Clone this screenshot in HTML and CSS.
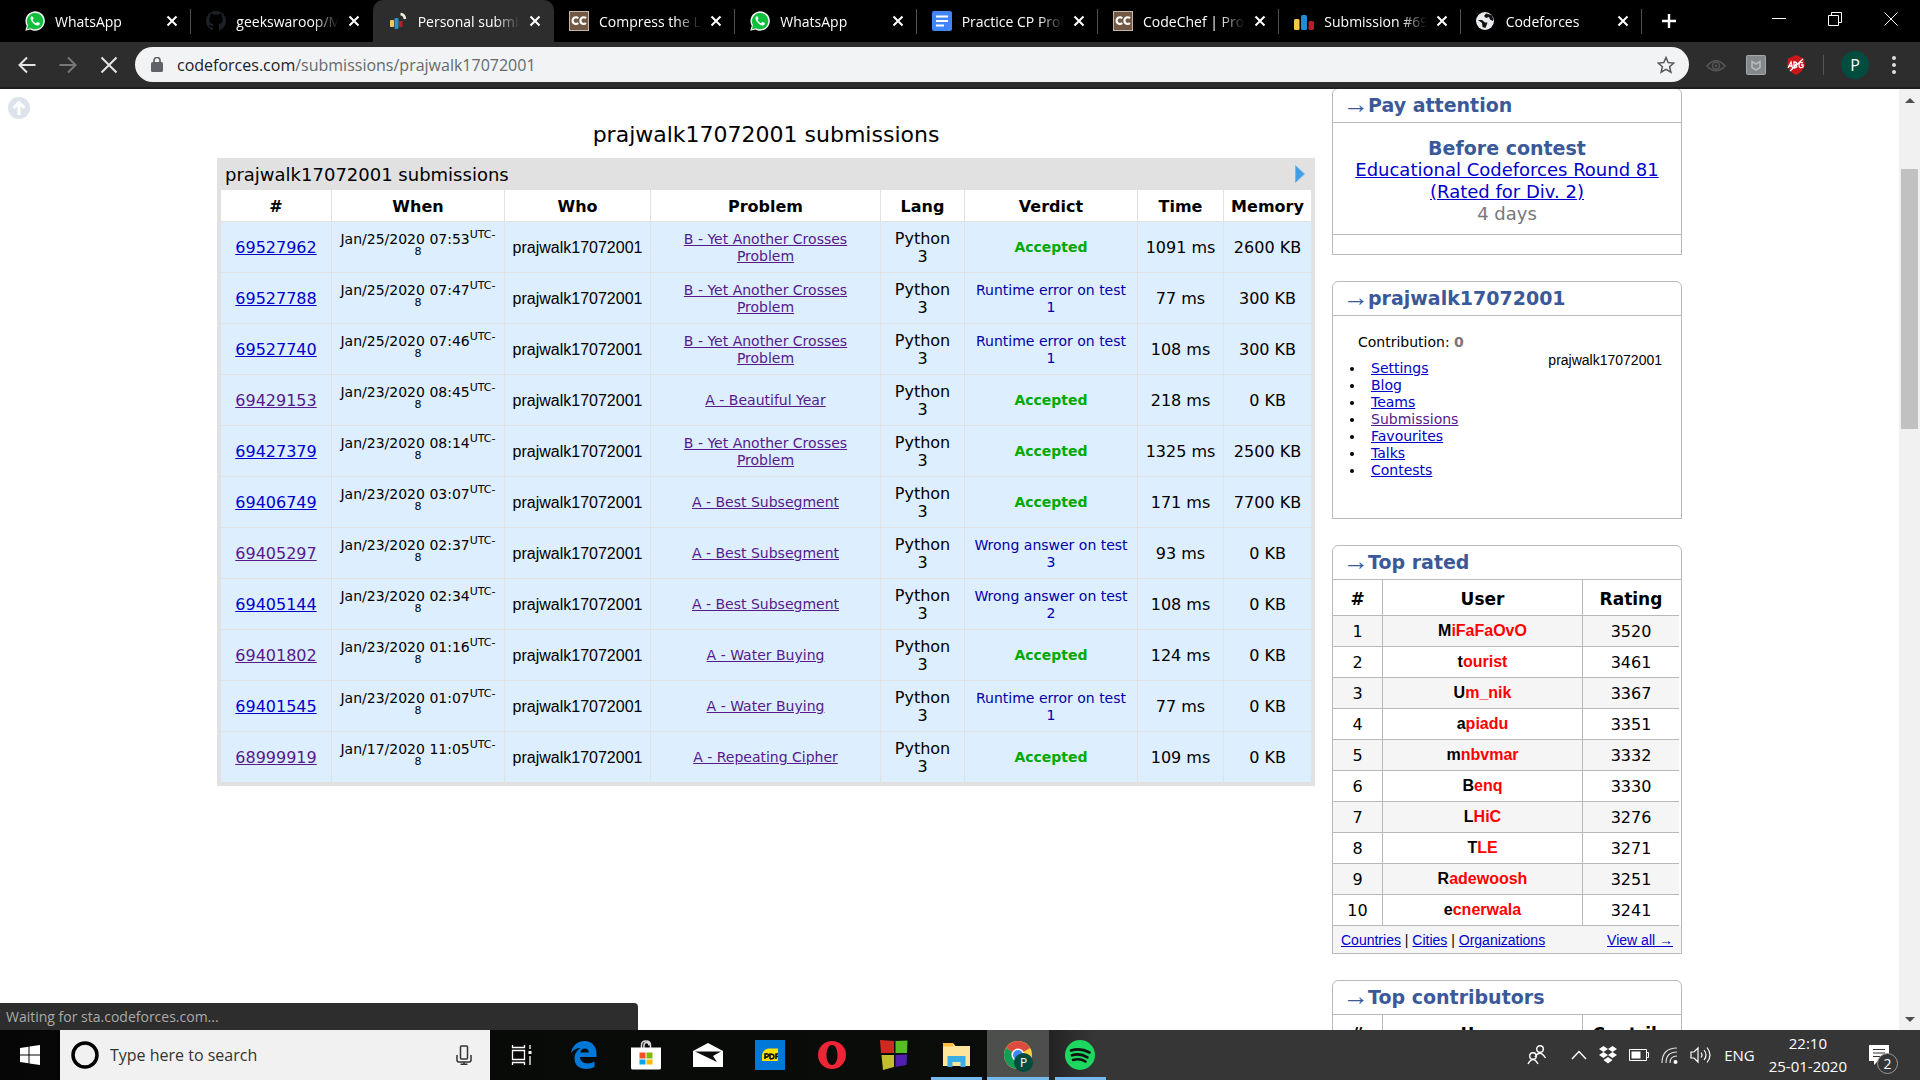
FILE: index.html
```html
<!DOCTYPE html>
<html lang="en">
<head>
<meta charset="utf-8">
<title>Personal submissions - Codeforces</title>
<link rel="stylesheet" href="styles.css">
</head>
<body>
<svg class="sprite" aria-hidden="true">
  <symbol id="i-close" viewBox="0 0 12 12"><path d="M1.500 1.500 10.500 10.500M10.500 1.500 1.500 10.500" fill="none" stroke="currentColor" stroke-width="2"/></symbol>
  <symbol id="i-whatsapp" viewBox="0 0 20 20"><path d="M.3 19.800 1.700 14.700A9.700 9.700 0 1 1 5.400 18.400Z" fill="#f4f4f4"/><path d="M1.900 18.200 3 14.300a8.200 8.200 0 1 1 2.900 2.900Z" fill="#12bf3c"/><path d="M6.800 5.200c-1.200.5-1.500 2-1 3.300.9 2.700 3.500 5.400 6.300 6 1.400.2 2.700-.6 2.800-1.900.1-.5-2.200-1.600-2.600-1.500-.5.1-.8 1.100-1.200 1.100-1.300-.3-3-2-3.500-3.300 0-.4.900-.9.900-1.400-.1-.6-.8-2.300-1.700-2.300Z" fill="#fff"/></symbol>
  <symbol id="i-chef" viewBox="0 0 20 20"><rect width="20" height="20" fill="#c9b6a6"/><rect x="1" y="1" width="18" height="18" fill="#735844"/><path d="M9.200 7.300A3.300 3.300 0 1 0 9.200 12M17 7.300A3.300 3.300 0 1 0 17 12" fill="none" stroke="#fff" stroke-width="2.200"/></symbol>
</svg>

<header class="tabs">
  <div class="tab-list">
    <div class="tab"><svg class="fav"><use href="#i-whatsapp"/></svg><span class="tab-title">WhatsApp</span><button class="tab-close" aria-label="Close tab"><svg><use href="#i-close"/></svg></button></div>
    <div class="tab no-line"><svg class="fav" viewBox="0 0 20 20"><path d="M7 19.500v-3.200c-3 .6-3.600-1.300-4.500-2.300 2-.4 2.200 1.400 4.500.9.100-.7.400-1.100.8-1.400C4.500 13 3.300 11.500 3.300 8.600c0-1.200.4-2.200 1.100-3-.2-.8-.2-1.900.2-3 1.300.1 2.200.7 3 1.200a9 9 0 0 1 4.800 0c.8-.5 1.700-1.100 3-1.200.4 1.100.4 2.200.2 3 .7.800 1.100 1.800 1.100 3 0 2.900-1.200 4.400-4.500 4.900.6.500.8 1.200.8 2.200v3.800A10 10 0 1 0 7 19.500Z" fill="#1d2024"/></svg><span class="tab-title">geekswaroop/ML</span><button class="tab-close" aria-label="Close tab"><svg><use href="#i-close"/></svg></button></div>
    <div class="tab active"><svg class="fav" viewBox="0 0 20 20"><rect x="2" y="9" width="4" height="7" rx="1" fill="#f4c84b"/><rect x="6.500" y="7" width="4" height="11" rx="1" fill="#2a8fcb"/><rect x="11" y="10" width="3.500" height="6" rx="1" fill="#b3202c"/><path d="M12.500 3q4 .5 4.500 5" fill="none" stroke="#eef0df" stroke-width="2.600"/></svg><span class="tab-title">Personal submissions</span><button class="tab-close" aria-label="Close tab"><svg><use href="#i-close"/></svg></button></div>
    <div class="tab"><svg class="fav"><use href="#i-chef"/></svg><span class="tab-title">Compress the List</span><button class="tab-close" aria-label="Close tab"><svg><use href="#i-close"/></svg></button></div>
    <div class="tab"><svg class="fav"><use href="#i-whatsapp"/></svg><span class="tab-title">WhatsApp</span><button class="tab-close" aria-label="Close tab"><svg><use href="#i-close"/></svg></button></div>
    <div class="tab"><svg class="fav" viewBox="0 0 20 20"><rect width="20" height="20" rx="2" fill="#4285f4"/><path d="M4 5.500h12M4 10h12M4 14.500h8" stroke="#fff" stroke-width="2.200"/></svg><span class="tab-title">Practice CP Problems</span><button class="tab-close" aria-label="Close tab"><svg><use href="#i-close"/></svg></button></div>
    <div class="tab"><svg class="fav"><use href="#i-chef"/></svg><span class="tab-title">CodeChef | Programming</span><button class="tab-close" aria-label="Close tab"><svg><use href="#i-close"/></svg></button></div>
    <div class="tab"><svg class="fav" viewBox="0 0 20 20"><rect y="8" width="5.500" height="11" rx="1.500" fill="#f4c84b"/><rect x="7" y="4" width="6" height="15" rx="1.500" fill="#1f8dd0"/><rect x="14.500" y="10" width="5.500" height="9" rx="1.500" fill="#b91d25"/></svg><span class="tab-title">Submission #69527962</span><button class="tab-close" aria-label="Close tab"><svg><use href="#i-close"/></svg></button></div>
    <div class="tab"><svg class="fav" viewBox="0 0 20 20"><circle cx="9" cy="10" r="9" fill="#e8eaed"/><path d="M2 9h4l3 2.500h2.500l-2 5.500-3-1-.5-4ZM10 2.500 8 5l2 2 3-1 1 2.500 3 1.500.5-2-2-4Z" fill="#111"/></svg><span class="tab-title">Codeforces</span><button class="tab-close" aria-label="Close tab"><svg><use href="#i-close"/></svg></button></div>
  </div>
  <div class="window-tools">
    <button aria-label="New tab"><svg width="16" height="16" viewBox="0 0 16 16"><path d="M8 1v14M1 8h14" stroke="#fff" stroke-width="2.400"/></svg></button>
    <div class="window-buttons">
      <button aria-label="Minimize"><svg width="14" height="14" viewBox="0 0 14 14"><path d="M0 6.500h14" stroke="#fff"/></svg></button>
      <button aria-label="Restore"><svg width="14" height="14" viewBox="0 0 14 14"><path d="M.5 3.500h10v10H.5ZM3.500 3.500v-3h10v10h-3" fill="none" stroke="#fff"/></svg></button>
      <button aria-label="Close window"><svg width="14" height="14" viewBox="0 0 14 14"><path d="m.5.5 13 13m0-13-13 13" stroke="#fff"/></svg></button>
    </div>
  </div>
</header>

<nav class="toolbar" aria-label="Browser toolbar">
  <div class="nav-buttons">
    <button aria-label="Back"><svg width="18" height="18" viewBox="0 0 18 18"><path d="M17.500 9H2M9 1.500 1.500 9 9 16.500" fill="none" stroke="#e4e4e4" stroke-width="2"/></svg></button>
    <button aria-label="Forward"><svg width="18" height="18" viewBox="0 0 18 18"><path d="M.5 9H16M9 1.500 16.500 9 9 16.500" fill="none" stroke="#777" stroke-width="2"/></svg></button>
    <button aria-label="Stop"><svg width="18" height="18" viewBox="0 0 18 18"><path d="m1.500 1.500 15 15m0-15-15 15" stroke="#e4e4e4" stroke-width="2"/></svg></button>
  </div>
  <div class="omnibox">
    <svg width="12" height="16" viewBox="0 0 12 16"><rect y="5" width="12" height="10" rx="1.500" fill="#5f6368"/><path d="M3 6V3.500a3 3 0 0 1 6 0V6" fill="none" stroke="#5f6368" stroke-width="1.700"/></svg>
    <span class="url"><b>codeforces.com</b>/submissions/prajwalk17072001</span>
    <button aria-label="Bookmark this page"><svg width="18" height="18" viewBox="0 0 18 18"><path d="m9 1.500 2.200 5.100 5.600.5-4.200 3.700 1.300 5.400L9 13.300l-4.900 2.900 1.300-5.400L1.200 7.100l5.600-.5Z" fill="none" stroke="#55595e" stroke-width="1.500"/></svg></button>
  </div>
  <div class="extensions">
    <button aria-label="Eye extension"><svg width="20" height="20" viewBox="0 0 20 20"><path d="M1 11Q10 .5 19 11 10 20.500 1 11Z" fill="none" stroke="#555" stroke-width="1.700"/><circle cx="10" cy="10.800" r="3.500" fill="none" stroke="#555" stroke-width="1.600"/><circle cx="10" cy="10.800" r="1.300" fill="#555"/></svg></button>
    <button aria-label="Safety extension"><svg width="20" height="20" viewBox="0 0 20 20"><rect x=".5" y=".5" width="19" height="19" rx="1" fill="#84888b" stroke="#a4a8ab"/><path d="M6 6.500 10 9l4-2.500v6L10 15l-4-2.500Z" fill="none" stroke="#b4b8bb" stroke-width="1.600"/></svg></button>
    <button aria-label="Ad blocker"><svg width="20" height="20" viewBox="0 0 20 20"><path d="M10 0 18 3.500 19 11 15 17l-5 3-5-3-4-6 1-7.500Z" fill="#c9161d"/><path d="m2 13 3-6 1.500 6M3 11h3M8 13V7q4 0 1.500 3 3.500 2-1.500 3M17 8q-4-2-4 2t4 2v-2h-2M4 16 17 4" fill="none" stroke="#fff" stroke-width="1.300"/></svg></button>
  </div>
  <span class="divider"></span>
  <button class="avatar" aria-label="Profile">P</button>
  <button class="menu" aria-label="Menu"><svg width="4" height="20" viewBox="0 0 4 20"><g fill="#ddd"><circle cx="2" cy="3" r="2"/><circle cx="2" cy="10" r="2"/><circle cx="2" cy="17" r="2"/></g></svg></button>
</nav>

<div class="viewport">
  <div class="page">
    <button class="to-top" aria-label="Scroll to top"><svg width="22" height="22" viewBox="0 0 22 22"><circle cx="11" cy="11" r="11" fill="#dde3ea"/><path d="M11 18V6M5.500 11 11 5.500l5.500 5.500" fill="none" stroke="#fff" stroke-width="3"/></svg></button>
    <div class="content">
      <main>
        <h1>prajwalk17072001 submissions</h1>
        <section class="datatable">
          <div class="datatable-head"><span>prajwalk17072001 submissions</span><button aria-label="Show filter"><svg width="10" height="18" viewBox="0 0 10 18"><path d="M.5.500 9.500 9 .5 17.500Z" fill="#3f9fe6" stroke="#77b7e8"/></svg></button></div>
          <table class="submissions">
            <colgroup><col class="c-id"><col class="c-when"><col class="c-who"><col><col class="c-lang"><col class="c-verdict"><col class="c-time"><col class="c-mem"></colgroup>
            <thead><tr><th>#</th><th>When</th><th>Who</th><th>Problem</th><th>Lang</th><th>Verdict</th><th>Time</th><th>Memory</th></tr></thead>
            <tbody>
            <tr><td><a href="#s">69527962</a></td><td class="small">Jan/25/2020 07:53<sup>UTC-<br>8</sup></td><td class="who">prajwalk17072001</td><td class="small"><a class="seen" href="#p">B - Yet Another Crosses<br>Problem</a></td><td>Python<br>3</td><td class="small ok">Accepted</td><td>1091 ms</td><td>2600 KB</td></tr>
            <tr><td><a href="#s">69527788</a></td><td class="small">Jan/25/2020 07:47<sup>UTC-<br>8</sup></td><td class="who">prajwalk17072001</td><td class="small"><a class="seen" href="#p">B - Yet Another Crosses<br>Problem</a></td><td>Python<br>3</td><td class="small bad">Runtime error on test<br>1</td><td>77 ms</td><td>300 KB</td></tr>
            <tr><td><a href="#s">69527740</a></td><td class="small">Jan/25/2020 07:46<sup>UTC-<br>8</sup></td><td class="who">prajwalk17072001</td><td class="small"><a class="seen" href="#p">B - Yet Another Crosses<br>Problem</a></td><td>Python<br>3</td><td class="small bad">Runtime error on test<br>1</td><td>108 ms</td><td>300 KB</td></tr>
            <tr><td><a class="seen" href="#s">69429153</a></td><td class="small">Jan/23/2020 08:45<sup>UTC-<br>8</sup></td><td class="who">prajwalk17072001</td><td class="small"><a class="seen" href="#p">A - Beautiful Year</a></td><td>Python<br>3</td><td class="small ok">Accepted</td><td>218 ms</td><td>0 KB</td></tr>
            <tr><td><a href="#s">69427379</a></td><td class="small">Jan/23/2020 08:14<sup>UTC-<br>8</sup></td><td class="who">prajwalk17072001</td><td class="small"><a class="seen" href="#p">B - Yet Another Crosses<br>Problem</a></td><td>Python<br>3</td><td class="small ok">Accepted</td><td>1325 ms</td><td>2500 KB</td></tr>
            <tr><td><a href="#s">69406749</a></td><td class="small">Jan/23/2020 03:07<sup>UTC-<br>8</sup></td><td class="who">prajwalk17072001</td><td class="small"><a class="seen" href="#p">A - Best Subsegment</a></td><td>Python<br>3</td><td class="small ok">Accepted</td><td>171 ms</td><td>7700 KB</td></tr>
            <tr><td><a class="seen" href="#s">69405297</a></td><td class="small">Jan/23/2020 02:37<sup>UTC-<br>8</sup></td><td class="who">prajwalk17072001</td><td class="small"><a class="seen" href="#p">A - Best Subsegment</a></td><td>Python<br>3</td><td class="small bad">Wrong answer on test<br>3</td><td>93 ms</td><td>0 KB</td></tr>
            <tr><td><a href="#s">69405144</a></td><td class="small">Jan/23/2020 02:34<sup>UTC-<br>8</sup></td><td class="who">prajwalk17072001</td><td class="small"><a class="seen" href="#p">A - Best Subsegment</a></td><td>Python<br>3</td><td class="small bad">Wrong answer on test<br>2</td><td>108 ms</td><td>0 KB</td></tr>
            <tr><td><a class="seen" href="#s">69401802</a></td><td class="small">Jan/23/2020 01:16<sup>UTC-<br>8</sup></td><td class="who">prajwalk17072001</td><td class="small"><a class="seen" href="#p">A - Water Buying</a></td><td>Python<br>3</td><td class="small ok">Accepted</td><td>124 ms</td><td>0 KB</td></tr>
            <tr><td><a href="#s">69401545</a></td><td class="small">Jan/23/2020 01:07<sup>UTC-<br>8</sup></td><td class="who">prajwalk17072001</td><td class="small"><a class="seen" href="#p">A - Water Buying</a></td><td>Python<br>3</td><td class="small bad">Runtime error on test<br>1</td><td>77 ms</td><td>0 KB</td></tr>
            <tr><td><a class="seen" href="#s">68999919</a></td><td class="small">Jan/17/2020 11:05<sup>UTC-<br>8</sup></td><td class="who">prajwalk17072001</td><td class="small"><a class="seen" href="#p">A - Repeating Cipher</a></td><td>Python<br>3</td><td class="small ok">Accepted</td><td>109 ms</td><td>0 KB</td></tr>
            </tbody>
          </table>
        </section>
      </main>

      <aside class="sidebar">
        <section class="box">
          <h2><span class="arrow">→</span>Pay attention</h2>
          <div class="contest"><strong>Before contest</strong><a href="#c">Educational Codeforces Round 81<br>(Rated for Div. 2)</a><span>4 days</span></div>
          <div class="strip"></div>
        </section>
        <section class="box">
          <h2><span class="arrow">→</span>prajwalk17072001</h2>
          <div class="profile">
            <div>
              <p>Contribution: <b>0</b></p>
              <ul>
                <li><a href="#a">Settings</a></li><li><a href="#a">Blog</a></li><li><a href="#a">Teams</a></li><li><a class="seen" href="#a">Submissions</a></li><li><a href="#a">Favourites</a></li><li><a href="#a">Talks</a></li><li><a href="#a">Contests</a></li>
              </ul>
            </div>
            <span class="handle">prajwalk17072001</span>
          </div>
        </section>
        <section class="box">
          <h2><span class="arrow">→</span>Top rated</h2>
          <table class="ranking">
            <thead><tr><th class="r-no">#</th><th class="r-user">User</th><th>Rating</th></tr></thead>
            <tbody>
            <tr><td>1</td><td class="user"><i>M</i>iFaFaOvO</td><td>3520</td></tr>
            <tr><td>2</td><td class="user"><i>t</i>ourist</td><td>3461</td></tr>
            <tr><td>3</td><td class="user"><i>U</i>m_nik</td><td>3367</td></tr>
            <tr><td>4</td><td class="user"><i>a</i>piadu</td><td>3351</td></tr>
            <tr><td>5</td><td class="user"><i>m</i>nbvmar</td><td>3332</td></tr>
            <tr><td>6</td><td class="user"><i>B</i>enq</td><td>3330</td></tr>
            <tr><td>7</td><td class="user"><i>L</i>HiC</td><td>3276</td></tr>
            <tr><td>8</td><td class="user"><i>T</i>LE</td><td>3271</td></tr>
            <tr><td>9</td><td class="user"><i>R</i>adewoosh</td><td>3251</td></tr>
            <tr><td>10</td><td class="user"><i>e</i>cnerwala</td><td>3241</td></tr>
            </tbody>
          </table>
          <div class="box-foot"><span><a href="#l">Countries</a> | <a href="#l">Cities</a> | <a href="#l">Organizations</a></span><a href="#l">View all →</a></div>
        </section>
        <section class="box">
          <h2><span class="arrow">→</span>Top contributors</h2>
          <table class="ranking"><thead><tr><th class="r-no">#</th><th class="r-user">User</th><th>Contrib.</th></tr></thead></table>
        </section>
      </aside>
    </div>
  </div>
  <div class="scrollbar" aria-hidden="true">
    <svg width="10" height="5" viewBox="0 0 10 5"><path d="M0 5 5 0l5 5Z" fill="#505050"/></svg>
    <div class="track"><div class="thumb"></div></div>
    <svg width="10" height="5" viewBox="0 0 10 5"><path d="m0 0 5 5 5-5Z" fill="#505050"/></svg>
  </div>
  <div class="status">Waiting for sta.codeforces.com...</div>
</div>

<footer class="taskbar">
  <button class="start" aria-label="Start"><svg width="20" height="20" viewBox="0 0 20 20"><path d="M0 3 8.500 1.700v7.800H0ZM9.500 1.500 20 0v9.500H9.500ZM0 10.500h8.500v7.800L0 17ZM9.500 10.500H20V20L9.500 18.500Z" fill="#fff"/></svg></button>
  <label class="search">
    <svg width="28" height="28" viewBox="0 0 28 28"><circle cx="14" cy="14" r="12" fill="none" stroke="#000" stroke-width="3.500"/></svg>
    <input type="text" placeholder="Type here to search" aria-label="Search">
    <svg width="16" height="20" viewBox="0 0 16 20"><rect x="4.500" y="1" width="7" height="13" rx="1" fill="none" stroke="#333" stroke-width="1.500"/><path d="M1 10v5q0 2 2 2h10q2 0 2-2v-5M8 17v2M4.500 19.200h7" fill="none" stroke="#333" stroke-width="1.500"/></svg>
  </label>
  <div class="apps">
    <button aria-label="Task view"><svg width="22" height="20" viewBox="0 0 22 20"><path d="M1.500 0v2.500h12V0M1.500 5.500h12v9h-12ZM1.500 20v-2.500h12V20M19 0v4M19 11v9" fill="none" stroke="#fff" stroke-width="1.300"/><rect x="17.500" y="6" width="3" height="3" fill="#fff"/></svg></button>
    <button aria-label="Edge"><svg width="26" height="28" viewBox="0 0 26 28"><path d="M0 12C1.500 4 7 0 13.500 0 21 0 25.500 5.500 25.500 12.500V16H9c.5 7 9 8 14.500 4.500V26C15 30 3.500 28 3.500 17.500 3.500 12.500 6 9 10 7 5.500 7 2 9 0 12ZM9.300 11.500h8.500C17.800 6 10 6 9.300 11.500Z" fill="#0078d7"/></svg></button>
    <button aria-label="Store"><svg width="30" height="30" viewBox="0 0 30 30"><path d="M10.500 9V5q0-4 4.500-4t4.500 4v4M13 9V5.500q0-3 2.500-3t2.500 3" fill="none" stroke="#ddd" stroke-width="1.500"/><path d="M0 7.500h30V28q0 1.500-1.500 1.500h-27Q0 29.500 0 28Z" fill="#fff"/><path d="M8.500 12.500h6v6h-6Z" fill="#f25022"/><path d="M15.500 12.500h6v6h-6Z" fill="#7fba00"/><path d="M8.500 19.500h6v5h-6Z" fill="#00a4ef"/><path d="M15.500 19.500h6v5h-6Z" fill="#ffb900"/></svg></button>
    <button aria-label="Mail"><svg width="30" height="24" viewBox="0 0 30 24"><path d="M0 8 15 0l15 8v16H0Z" fill="#fff"/><path d="M2 8.500h26L20 13l4 6-10.500-5Z" fill="#0a0d0a"/></svg></button>
    <button aria-label="PDF reader"><svg width="30" height="30" viewBox="0 0 30 30"><path d="M0 0h30v30H0Z" fill="#0078d7"/><path d="M7 21V15q1-6 7-6.500h9V21Z" fill="#ffe000"/><path d="M10 19v-5q4-.5 3.500 1.500T10 17M15 19v-5q4 0 4 2.500T15 19M21 19v-5h2M21 16.500h2" fill="none" stroke="#111" stroke-width="1.600"/></svg></button>
    <button aria-label="Opera"><svg width="28" height="28" viewBox="0 0 28 28"><path d="M14 0a14 14 0 1 0 0 28 14 14 0 0 0 0-28Zm0 4c3.500 0 5.500 4.500 5.500 10S17.500 24 14 24s-5.500-4.500-5.500-10S10.500 4 14 4Z" fill="#ed2537"/></svg></button>
    <button aria-label="Colour squares"><svg width="28" height="30" viewBox="0 0 28 30"><path d="m0 0 14 1v12H1Z" fill="#cf2a22"/><path d="m15.500 1 12-.5L27 13H15.500Z" fill="#55be25"/><path d="M1.500 15H14v12L3 30Z" fill="#c4bd31"/><path d="M15.500 15 27 14.500 26.500 25l-11 2Z" fill="#5220ae"/></svg></button>
    <button class="running" aria-label="File Explorer"><svg width="28" height="24" viewBox="0 0 28 24"><path d="M1 0h10l2.500 3H28v20H1Z" fill="#ffe59a"/><path d="M1 0h10v3.500H1Z" fill="#ffbd3b"/><path d="M5.500 13h18v11h-5v-5h-8v5h-5Z" fill="#38ade8"/></svg></button>
    <button class="running current" aria-label="Chrome"><svg width="28" height="28" viewBox="0 0 28 28"><circle cx="14" cy="14" r="14" fill="#ffcd40"/><path d="M14 14 1.900 7A14 14 0 0 1 26.100 7Z" fill="#dc4b3e"/><path d="M14 14 1.900 7A14 14 0 0 0 14 28Z" fill="#0f9d58"/><circle cx="14" cy="14" r="6.500" fill="#fff"/><circle cx="14" cy="14" r="5" fill="#4285f4"/></svg><span class="mini">P</span></button>
    <button class="running" aria-label="Spotify"><svg width="30" height="30" viewBox="0 0 30 30"><circle cx="15" cy="15" r="15" fill="#1ed760"/><path d="M6 10.500q9.500-3 18.500 2M7 15.300q8-2.500 15.500 2M8 20q7-2 12.500 1.500" fill="none" stroke="#111" stroke-width="2.600" stroke-linecap="round"/></svg></button>
  </div>
  <div class="tray">
    <svg class="people" width="20" height="20" viewBox="0 0 20 20"><g fill="none" stroke="#fff" stroke-width="1.400"><circle cx="13" cy="4" r="3.300"/><path d="M8 12q5-8 10.500 1"/><circle cx="6" cy="11" r="3.300"/><path d="M1 19q5-9 10 0"/></g></svg>
    <svg width="16" height="16" viewBox="0 0 16 16"><path d="m1 12 7-7.500 7 7.500" fill="none" stroke="#fff" stroke-width="1.400"/></svg>
    <svg width="18" height="18" viewBox="0 0 18 18"><path d="m4.500 0 4.500 3-4.500 3L0 3Zm9 0L18 3l-4.500 3L9 3ZM4.500 6 9 9l-4.500 3L0 9Zm9 0L18 9l-4.500 3L9 9ZM9 11l4.500 3L9 17.500 4.500 14Z" fill="#fff"/></svg>
    <svg width="20" height="12" viewBox="0 0 20 12"><path d="M.5.500h17v11H.5ZM18 3.500h1.500v5H18" fill="none" stroke="#fff"/><path d="M2.500 2.500h9v7h-9Z" fill="#fff"/></svg>
    <svg width="17" height="17" viewBox="0 0 17 17"><path d="M1 16Q1 1 16 1M5 16Q5 5 16 5M9 16q0-7 7-7" fill="none" stroke="#ddd" stroke-width="1.200"/><circle cx="14.500" cy="15" r="2" fill="#fff"/></svg>
    <svg width="22" height="18" viewBox="0 0 22 18"><path d="M1 6v6h3l4 4V2L4 6ZM11 6.500q2 2.500 0 5M14 4q4 5 0 10M17 1.500q6 7.500 0 15" fill="none" stroke="#fff" stroke-width="1.200"/></svg>
    <span>ENG</span>
    <time class="clock">22:10<br>25-01-2020</time>
    <div class="notice"><svg width="20" height="20" viewBox="0 0 20 20"><path d="M0 0h20v16H9l-4 4v-4H0Z" fill="#fff"/><path d="M4 4.500h12M4 8h12M4 11.500h8" stroke="#333" stroke-width="1.200"/></svg><span class="badge">2</span></div>
  </div>
</footer>
</body>
</html>
```
FILE: styles.css
```css
* { box-sizing: border-box; }
html, body { height: 100%; }
body {
  margin: 0;
  display: flex;
  flex-direction: column;
  overflow: hidden;
  font-family: "DejaVu Sans", sans-serif;
  font-size: 16px;
  color: #000;
}
button { margin: 0; padding: 0; border: 0; background: none; color: inherit; font: inherit; display: flex; align-items: center; justify-content: center; flex: none; }
svg { display: block; flex: none; }
a { color: #0000cc; }
a.seen { color: #551a8b; }
.sprite { display: none; }

/* Browser tabs */
.tabs, .toolbar, .status, .taskbar { font-family: "Open Sans", sans-serif; }
.tabs { display: flex; flex: none; height: 42px; background: #000; color: #fff; font-size: 14px; }
.tab-list { display: flex; flex: 1; min-width: 0; padding-left: 10px; }
.tab { position: relative; display: flex; flex: 1; min-width: 0; align-items: center; padding: 0 13px 0 15px; }
.tab::after { content: ""; position: absolute; right: 0; top: 9px; width: 1px; height: 25px; background: #505050; }
.tab.no-line::after, .tab.active::after { display: none; }
.tab.active { background: #2d2d2d; border-radius: 10px 10px 0 0; }
.fav { width: 20px; height: 20px; margin-right: 10px; }
.tab-title { flex: 1; min-width: 0; overflow: hidden; white-space: nowrap; mask-image: linear-gradient(to right, #000 75%, transparent 100%); }
.tab-close { margin-left: 9px; }
.tab-close svg { width: 12px; height: 12px; }
.window-tools { display: flex; width: 278px; align-items: center; justify-content: space-between; padding: 0 22px 0 19px; }
.window-buttons { display: flex; gap: 42px; padding-bottom: 4px; }

/* Toolbar */
.toolbar { display: flex; flex: none; align-items: center; gap: 17px; height: 47px; padding: 0 18px 0 18px; background: #2d2d2d; border-bottom: 2px solid #1f1f1f; }
.nav-buttons { display: flex; gap: 23px; }
.extensions { display: flex; gap: 20px; }
.omnibox { display: flex; flex: 1; align-items: center; height: 35px; padding: 0 14px 0 16px; border-radius: 18px; background: #f1f3f4; }
.url { flex: 1; margin-left: 14px; color: #66696d; }
.url b { color: #202124; font-weight: 400; }
.divider { width: 1px; height: 20px; background: #555; }
.avatar { width: 28px; height: 28px; border-radius: 50%; background: #004d40; color: #fff; }
.menu { width: 16px; }

/* Page area */
.viewport { position: relative; display: flex; flex: 1; min-height: 0; overflow: hidden; background: #fff; }
.page { position: relative; flex: 1; min-width: 0; overflow: hidden; }
.to-top { position: absolute; left: 8px; top: 8px; }
.content { display: flex; gap: 17px; max-width: 1465px; margin: 0 auto; }
main { flex: 1; min-width: 0; }
h1 { margin: 33px 0 10px; font-size: 22px; line-height: 26px; font-weight: 400; text-align: center; }
.datatable { padding: 0 4px 4px; background: #e1e1e1; }
.datatable-head { display: flex; align-items: center; justify-content: space-between; height: 32px; padding: 0 6px 0 4px; font-size: 18px; }
.submissions { width: 100%; table-layout: fixed; border-collapse: separate; border-spacing: 0; text-align: center; line-height: 18px; }
.submissions th { height: 32px; padding: 2px 0 0; background: #fff; border-bottom: 1px solid #e1e1e1; }
.submissions td { height: 51px; padding: 1px 0 0; background: #ddeeff; border-bottom: 1px solid #e1e1e1; }
.submissions th + th, .submissions td + td { border-left: 1px solid #e1e1e1; }
.submissions tbody tr:last-child td { border-bottom: 0; height: 50px; }
.c-id { width: 110px; }
.c-when, .c-verdict { width: 173px; }
.c-who { width: 146px; }
.c-lang { width: 84px; }
.c-time { width: 86px; }
.c-mem { width: 88px; }
.small { font-size: 14px; line-height: 17px; }
sup { font-size: 11px; line-height: 0; }
.who { font-family: "Liberation Sans", sans-serif; }
.ok { color: #00aa00; font-weight: 700; }
.bad { color: #0000aa; }

/* Sidebar */
.sidebar { display: flex; flex: none; flex-direction: column; gap: 26px; width: 350px; margin-top: -1px; }
.box { border: 1px solid #b9b9b9; border-radius: 6px 6px 0 0; }
h2 { display: flex; align-items: center; height: 34px; margin: 0; padding: 0 0 2px 10px; border-bottom: 1px solid #b9b9b9; font-size: 19px; line-height: 24px; color: #3b5998; }
.arrow { width: 25px; font-family: "Liberation Serif", serif; font-size: 26px; font-weight: 400; }
.contest { display: flex; flex-direction: column; padding: 14px 0 9px; border-bottom: 1px solid #b9b9b9; text-align: center; font-size: 18px; line-height: 22px; }
.contest strong { font-size: 19px; color: #3b5998; }
.contest span { color: #777; }
.strip { height: 19px; }
.profile { display: flex; justify-content: space-between; height: 202px; padding: 18px 19px 0 25px; font-size: 14px; line-height: 17px; }
.profile p { margin: 0 0 9px; }
.profile b { color: #777; }
.profile ul { margin: 0; padding: 0 0 0 7px; }
.profile li { padding-left: 6px; }
.handle { padding-top: 18px; font-family: "Liberation Sans", sans-serif; }
.ranking { width: calc(100% - 2px); table-layout: fixed; border-collapse: separate; border-spacing: 0; text-align: center; }
.ranking th { height: 36px; padding: 2px 0 0; font-size: 17px; border-bottom: 1px solid #b9b9b9; }
.ranking td { height: 31px; padding: 0; border-bottom: 1px solid #b9b9b9; }
.ranking th + th, .ranking td + td { border-left: 1px solid #b9b9b9; }
.ranking tbody tr:nth-child(odd) { background: #f5f5f5; }
.r-no { width: 49px; }
.r-user { width: 200px; }
.user { color: #f00; font: bold 16px "Liberation Sans", sans-serif; }
.user i { color: #000; font-style: normal; }
.box-foot { display: flex; align-items: center; justify-content: space-between; height: 27px; padding: 0 8px; background: #f5f5f5; font: 14px "Liberation Sans", sans-serif; }

.scrollbar { display: flex; flex: none; flex-direction: column; align-items: center; gap: 8px; width: 21px; padding: 9px 0 8px; background: #f1f1f1; }
.track { flex: 1; align-self: stretch; padding: 58px 2px 0; }
.thumb { height: 260px; background: #c1c1c1; }
.status { position: absolute; left: 0; bottom: 0; width: 638px; height: 27px; padding-left: 6px; border-radius: 0 4px 0 0; background: #2d2d2d; color: #aaa; font-size: 14px; line-height: 27px; }

/* Taskbar */
.taskbar { display: flex; flex: none; height: 50px; background: linear-gradient(to right, #060606 0, #0a0d0a 52%, #363636 57%); color: #fff; font-size: 15px; }
.start { width: 60px; }
.search { display: flex; flex: none; align-items: center; width: 430px; padding: 0 18px 0 11px; background: #f1f1f1; }
.search input { flex: 1; min-width: 0; margin: 0; padding: 0 0 0 11px; border: 0; outline: 0; background: none; font: 16px "Open Sans", sans-serif; }
.search input::placeholder { color: #333; opacity: 1; }
.apps { display: flex; flex: 1; padding-left: 1px; }
.apps button { position: relative; width: 62px; }
.apps .running::after { content: ""; position: absolute; left: 6px; right: 5px; bottom: 0; height: 3px; background: #76b9ed; }
.apps .current { background: #4d4f4d; }
.apps .current::after { left: 0; right: 0; }
.mini { position: absolute; left: 27px; top: 23px; width: 19px; height: 19px; border-radius: 50%; background: #004d40; font-size: 12px; line-height: 19px; text-align: center; }
.tray { display: flex; align-items: center; gap: 12px; padding-right: 22px; }
.people { margin-right: 12px; }
.clock { padding: 0 10px 0 2px; line-height: 23px; text-align: center; }
.notice { position: relative; padding-right: 9px; }
.badge { position: absolute; right: 0; top: 8px; width: 21px; height: 21px; border: 1px solid #999; border-radius: 50%; background: #363636; font-size: 14px; line-height: 19px; text-align: center; }
```
